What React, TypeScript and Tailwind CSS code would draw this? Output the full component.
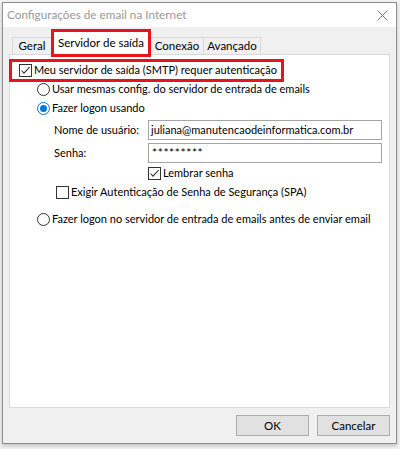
import React from "react";

const FONT = "font-['Lato','Noto_Sans',sans-serif]";

interface BoxProps {
    checked?: boolean
}

const Checkbox = ({ checked }: BoxProps) => {
    return (
        <div className="w-[13px] h-[13px] flex-none border border-[#333333] bg-white flex items-center justify-center">
            { checked && (
                <svg width="11" height="11" viewBox="0 0 11 11">
                    <polyline points="1.5,5.5 4,8.2 9.6,2.2" fill="none" stroke="#333333" strokeWidth="1.1" />
                </svg>
            ) }
        </div>
    )
}

const Radio = ({ checked }: BoxProps) => {
    return (
        <div className={ `w-[13px] h-[13px] flex-none rounded-full border bg-white flex items-center justify-center ${checked ? "border-[#0078d7]" : "border-[#333333]"}` }>
            { checked && <div className="w-[7px] h-[7px] rounded-full bg-[#0078d7]" /> }
        </div>
    )
}

interface TabProps {
    children: string
    className?: string
}

const Tab = ({ children, className }: TabProps) => {
    return (
        <div className={ `h-[17px] flex items-center justify-center border-t border-[#d9d9d9] bg-[#f0f0f0] text-[11.5px] text-black whitespace-nowrap ${className}` }>
            { children }
        </div>
    )
}

export default function App() {
    return (
        <div className={ `w-[400px] h-[449px] overflow-hidden bg-[#f2f2f2] pt-[2px] pl-[2px] ${FONT}` }>
            <div className="w-[395px] h-[442px] border border-[#8f8f8f] bg-[#f0f0f0] flex flex-col shadow-[0_2px_4px_rgba(0,0,0,0.2)]">

                {/* title bar */}
                <div className="h-[24px] flex-none bg-white flex items-center justify-between pl-[4px] pr-[8px]">
                    <span className="text-[11.75px] text-[#999999] whitespace-nowrap">Configurações de email na Internet</span>
                    <svg width="11" height="11" viewBox="0 0 11 11">
                        <path d="M0.5 0.5 L10.5 10.5 M10.5 0.5 L0.5 10.5" stroke="#777777" strokeWidth="1" />
                    </svg>
                </div>

                <div className="flex-1 flex flex-col px-[6px]">
                    {/* tabs */}
                    <div className="flex items-end h-[27px] pt-[2px] pl-[3px]">
                        <Tab className="w-[39px] border-l">Geral</Tab>
                        <div className="relative z-10 w-[100px] h-[28px] -mb-[3px] border-[3px] border-[#e8141c] bg-white flex items-start justify-center pt-[2px] text-[11.5px] text-black whitespace-nowrap">
                            Servidor de saída
                        </div>
                        <Tab className="w-[53px] border-r">Conexão</Tab>
                        <Tab className="w-[57px] border-r">Avançado</Tab>
                    </div>

                    {/* panel */}
                    <div className="h-[354px] flex-none border border-[#d9d9d9] bg-white flex flex-col text-[11px] text-black whitespace-nowrap">
                        <div className="mt-[4px] -ml-px w-[275px] h-[23px] border-[3px] border-[#e8141c] flex items-center pl-[7px] gap-[2px]">
                            <Checkbox checked />
                            <span>Meu servidor de saída (SMTP) requer autenticação</span>
                        </div>

                        <div className="mt-[1px] ml-[27px] h-[13px] flex items-center gap-[2px]">
                            <Radio />
                            <span>Usar mesmas config. do servidor de entrada de emails</span>
                        </div>

                        <div className="mt-[6px] ml-[27px] h-[13px] flex items-center gap-[2px]">
                            <Radio checked />
                            <span>Fazer logon usando</span>
                        </div>

                        <div className="mt-[5px] ml-[44px] flex items-center">
                            <span className="w-[94px]">Nome de usuário:</span>
                            <div className="w-[234px] h-[20px] border border-[#a5a5a5] flex items-center pl-[2px]">
                                juliana@manutencaodeinformatica.com.br
                            </div>
                        </div>

                        <div className="mt-[3px] ml-[44px] flex items-center">
                            <span className="w-[94px]">Senha:</span>
                            <div className="w-[234px] h-[20px] border border-[#a5a5a5] flex items-center pl-[3px] text-[12px] tracking-[0.6px]">
                                *********
                            </div>
                        </div>

                        <div className="mt-[4px] ml-[138px] h-[13px] flex items-center gap-[2px]">
                            <Checkbox checked />
                            <span>Lembrar senha</span>
                        </div>

                        <div className="mt-[6px] ml-[46px] h-[13px] flex items-center gap-[2px]">
                            <Checkbox />
                            <span>Exigir Autenticação de Senha de Segurança (SPA)</span>
                        </div>

                        <div className="mt-[14px] ml-[27px] h-[13px] flex items-center gap-[2px]">
                            <Radio />
                            <span>Fazer logon no servidor de entrada de emails antes de enviar email</span>
                        </div>
                    </div>

                    {/* buttons */}
                    <div className="mt-[7px] flex justify-end gap-[8px]">
                        <button className="w-[73px] h-[21px] border border-[#adadad] bg-[#e1e1e1] text-[11.5px] text-black">OK</button>
                        <button className="w-[73px] h-[21px] border border-[#adadad] bg-[#e1e1e1] text-[11.5px] text-black">Cancelar</button>
                    </div>
                </div>
            </div>
        </div>
    )
}
